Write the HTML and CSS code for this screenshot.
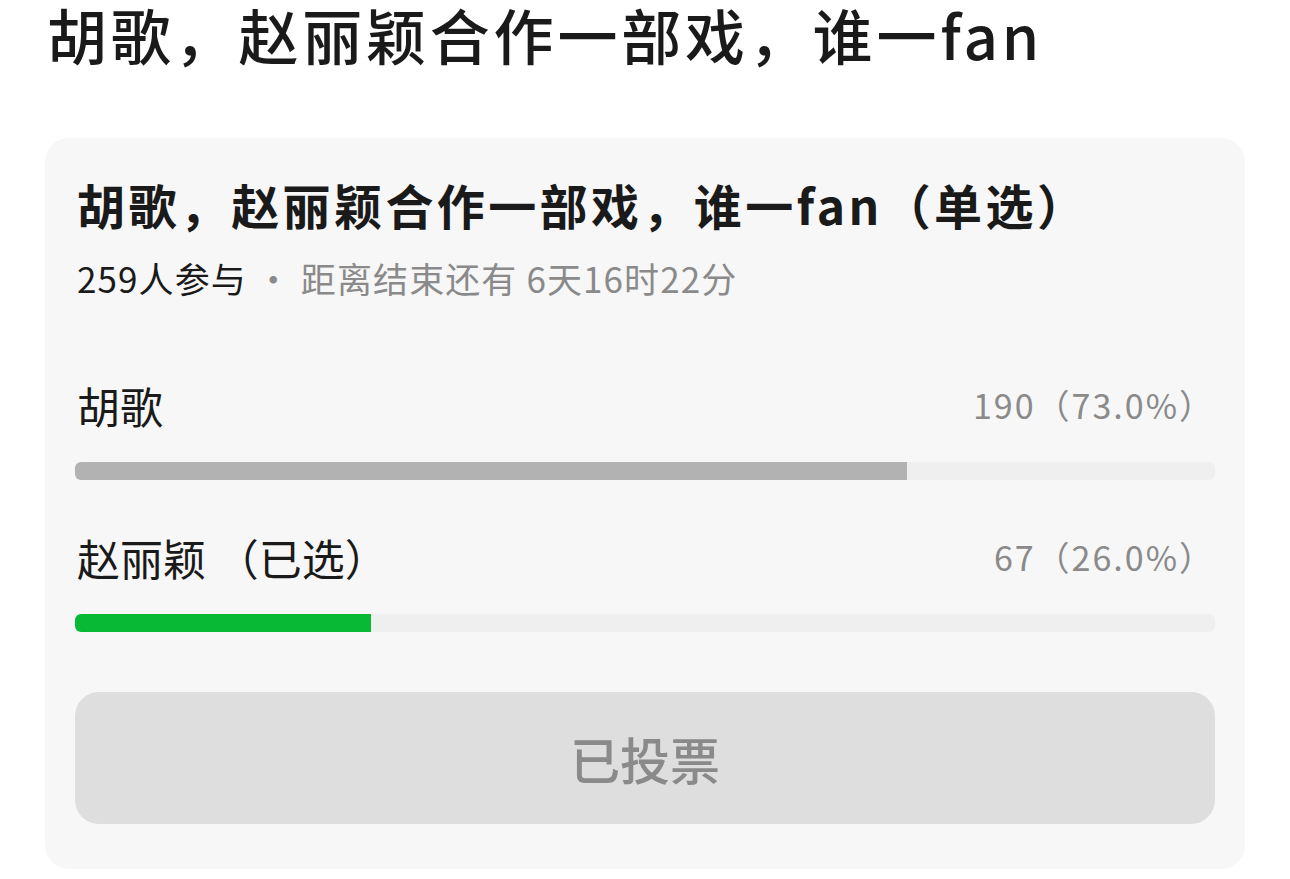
FILE: index.html
```html
<!DOCTYPE html>
<html lang="zh-CN">
<head>
<meta charset="utf-8">
<title>投票</title>
<link rel="stylesheet" href="styles.css">
</head>
<body>
<h1 class="page-title">胡歌，赵丽颖合作一部戏，谁一fan</h1>
<section class="vote-card">
  <h2 class="vote-title">胡歌，赵丽颖合作一部戏，谁一fan（单选）</h2>
  <p class="vote-meta"><span class="meta-count">259人参与</span> · 距离结束还有 6天16时22分</p>
  <div class="option first">
    <div class="option-row">
      <span class="option-label">胡歌</span>
      <span class="option-stat">190（73.0%）</span>
    </div>
    <div class="bar"><div class="bar-fill" style="width:73%"></div></div>
  </div>
  <div class="option">
    <div class="option-row">
      <span class="option-label">赵丽颖 （已选）</span>
      <span class="option-stat">67（26.0%）</span>
    </div>
    <div class="bar"><div class="bar-fill selected" style="width:26%"></div></div>
  </div>
  <button class="vote-btn" type="button">已投票</button>
</section>
</body>
</html>
```
FILE: styles.css
```css
html, body {
  margin: 0;
  padding: 0;
  background: #ffffff;
}
body {
  font-family: "Noto Sans CJK SC", "Noto Sans", sans-serif;
  color: #1a1a1a;
}
.page-title {
  margin: 0 0 70px 47px;
  font-size: 60px;
  line-height: 68px;
  font-weight: 500;
  letter-spacing: 3.8px;
  white-space: nowrap;
}
.vote-card {
  margin: 0 45px;
  background: #f7f7f7;
  border-radius: 24px;
  padding: 36px 30px 45px;
}
.vote-title {
  margin: 0 0 0 2px;
  font-size: 48px;
  line-height: 60px;
  font-weight: 700;
  letter-spacing: 3.4px;
  white-space: nowrap;
}
.vote-meta {
  margin: 20px 0 0 2px;
  font-size: 35px;
  line-height: 48px;
  letter-spacing: 1.1px;
  color: #8a8a8a;
}
.meta-count {
  color: #1a1a1a;
}
.option {
  margin-top: 49px;
}
.option.first {
  margin-top: 75px;
}
.option-row {
  display: flex;
  justify-content: space-between;
  align-items: center;
  height: 56px;
  padding-left: 2px;
}
.option-label {
  font-size: 43px;
  line-height: 56px;
}
.option-stat {
  font-size: 34px;
  line-height: 56px;
  letter-spacing: 2px;
  color: #8a8a8a;
}
.bar {
  margin-top: 29px;
  height: 18px;
  background: #efefef;
  border-radius: 6px;
  overflow: hidden;
}
.bar-fill {
  height: 100%;
  background: #b2b2b2;
}
.bar-fill.selected {
  background: #08b936;
}
.vote-btn {
  display: block;
  width: 100%;
  height: 132px;
  margin-top: 60px;
  border: none;
  border-radius: 24px;
  background: #dedede;
  color: #8a8a8a;
  font-family: inherit;
  font-size: 50px;
  font-weight: 500;
  padding: 0;
}
```
